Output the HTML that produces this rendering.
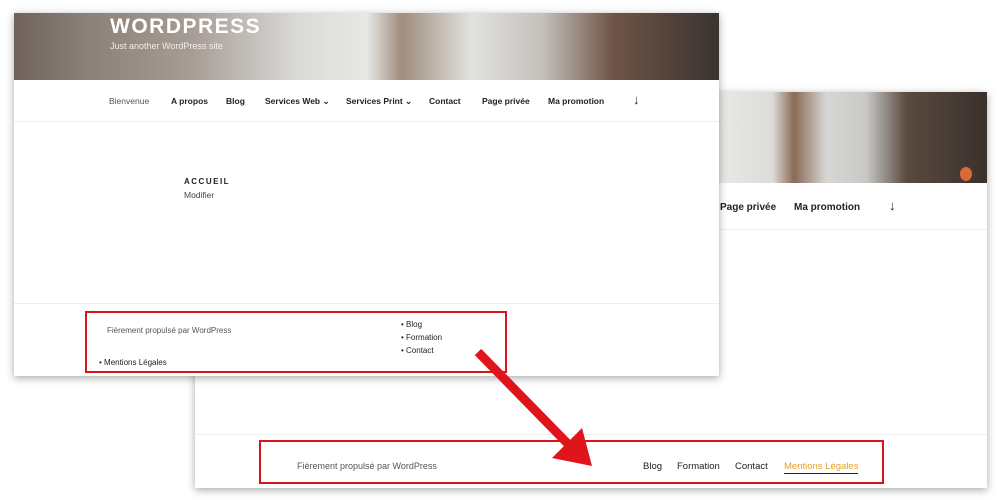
<!DOCTYPE html>
<html><head><style>
body{margin:0;width:1000px;height:500px;background:#fff;position:relative;overflow:hidden;font-family:"Liberation Sans",sans-serif;}
.abs{position:absolute}
.win{position:absolute;background:#fff;box-shadow:0 2px 8px rgba(0,0,0,.35)}
.nav{font-size:8.5px;font-weight:bold;color:#222;position:absolute;white-space:nowrap}
.hdr{background:linear-gradient(90deg,#6f6259 0%,#8a8078 10%,#a79c94 25%,#d9d9d7 40%,#e8e8e6 50%,#9f8d7e 55%,#e2e2e0 65%,#c4c0bc 75%,#6e5447 85%,#3b3330 100%)}
.red{position:absolute;border:2px solid #d9141b}
.sm{font-size:8px;color:#222;position:absolute}
</style></head><body>
<div class="win" style="left:195px;top:92px;width:792px;height:396px">
  <div class="abs" style="left:524px;top:0;width:268px;height:91px;background:linear-gradient(90deg,#e8e8e6 0%,#dcdcda 20%,#8a6a55 28%,#d7d7d5 40%,#c8c8c6 55%,#5a4a40 70%,#3a302c 100%)"></div>
  <div class="abs" style="left:765px;top:75px;width:12px;height:14px;border-radius:50%;background:#d86a3a"></div>
  <div class="nav" style="left:525px;top:110px;font-size:10px">Page privée</div>
  <div class="nav" style="left:599px;top:110px;font-size:10px">Ma promotion</div>
  <div class="nav" style="left:694px;top:106px;font-size:13px;font-weight:normal">↓</div>
  <div class="abs" style="left:0;top:137px;width:792px;height:1px;background:#eee"></div>
  <div class="abs" style="left:0;top:342px;width:792px;height:1px;background:#eee"></div>
  <div class="abs" style="left:102px;top:369px;font-size:9px;color:#555">Fièrement propulsé par WordPress</div>
  <div class="abs" style="left:448px;top:369px;font-size:9.5px;color:#222">Blog</div>
  <div class="abs" style="left:482px;top:369px;font-size:9.5px;color:#222">Formation</div>
  <div class="abs" style="left:540px;top:369px;font-size:9.5px;color:#222">Contact</div>
  <div class="abs" style="left:589px;top:369px;font-size:9.5px;color:#e6a12b;border-bottom:1px solid #222;padding-bottom:1px">Mentions Légales</div>
</div>
<div class="win" style="left:14px;top:13px;width:705px;height:363px">
  <div class="hdr abs" style="left:0;top:0;width:705px;height:67px"></div>
  <div class="abs" style="left:96px;top:2px;font-size:21px;font-weight:bold;color:#fff;letter-spacing:1.5px">WORDPRESS</div>
  <div class="abs" style="left:96px;top:28px;font-size:9px;color:#eee">Just another WordPress site</div>
  <div class="abs" style="left:0;top:108px;width:705px;height:1px;background:#eee"></div>
  <div class="nav" style="left:95px;top:83px;font-weight:normal;color:#555">Bienvenue</div>
  <div class="nav" style="left:157px;top:83px">A propos</div>
  <div class="nav" style="left:212px;top:83px">Blog</div>
  <div class="nav" style="left:251px;top:83px">Services Web ⌄</div>
  <div class="nav" style="left:332px;top:83px">Services Print ⌄</div>
  <div class="nav" style="left:415px;top:83px">Contact</div>
  <div class="nav" style="left:468px;top:83px">Page privée</div>
  <div class="nav" style="left:534px;top:83px">Ma promotion</div>
  <div class="nav" style="left:619px;top:79px;font-size:13px;font-weight:normal">↓</div>
  <div class="abs" style="left:170px;top:164px;font-size:8px;font-weight:bold;letter-spacing:1.5px;color:#222">ACCUEIL</div>
  <div class="abs" style="left:170px;top:177px;font-size:8.5px;color:#444">Modifier</div>
  <div class="abs" style="left:0;top:290px;width:705px;height:1px;background:#eee"></div>
  <div class="sm" style="left:93px;top:313px;color:#555">Fièrement propulsé par WordPress</div>
  <div class="sm" style="left:387px;top:307px">• Blog</div>
  <div class="sm" style="left:387px;top:320px">• Formation</div>
  <div class="sm" style="left:387px;top:333px">• Contact</div>
  <div class="sm" style="left:85px;top:345px">• Mentions Légales</div>
</div>
<div class="red" style="left:85px;top:311px;width:418px;height:58px"></div>
<div class="red" style="left:259px;top:440px;width:621px;height:40px"></div>
<svg class="abs" style="left:0;top:0" width="1000" height="500">
  <line x1="478" y1="352" x2="570" y2="446" stroke="#e0141b" stroke-width="9"/>
  <polygon points="552,458 592,466 582,428" fill="#e0141b"/>
</svg>
</body></html>
